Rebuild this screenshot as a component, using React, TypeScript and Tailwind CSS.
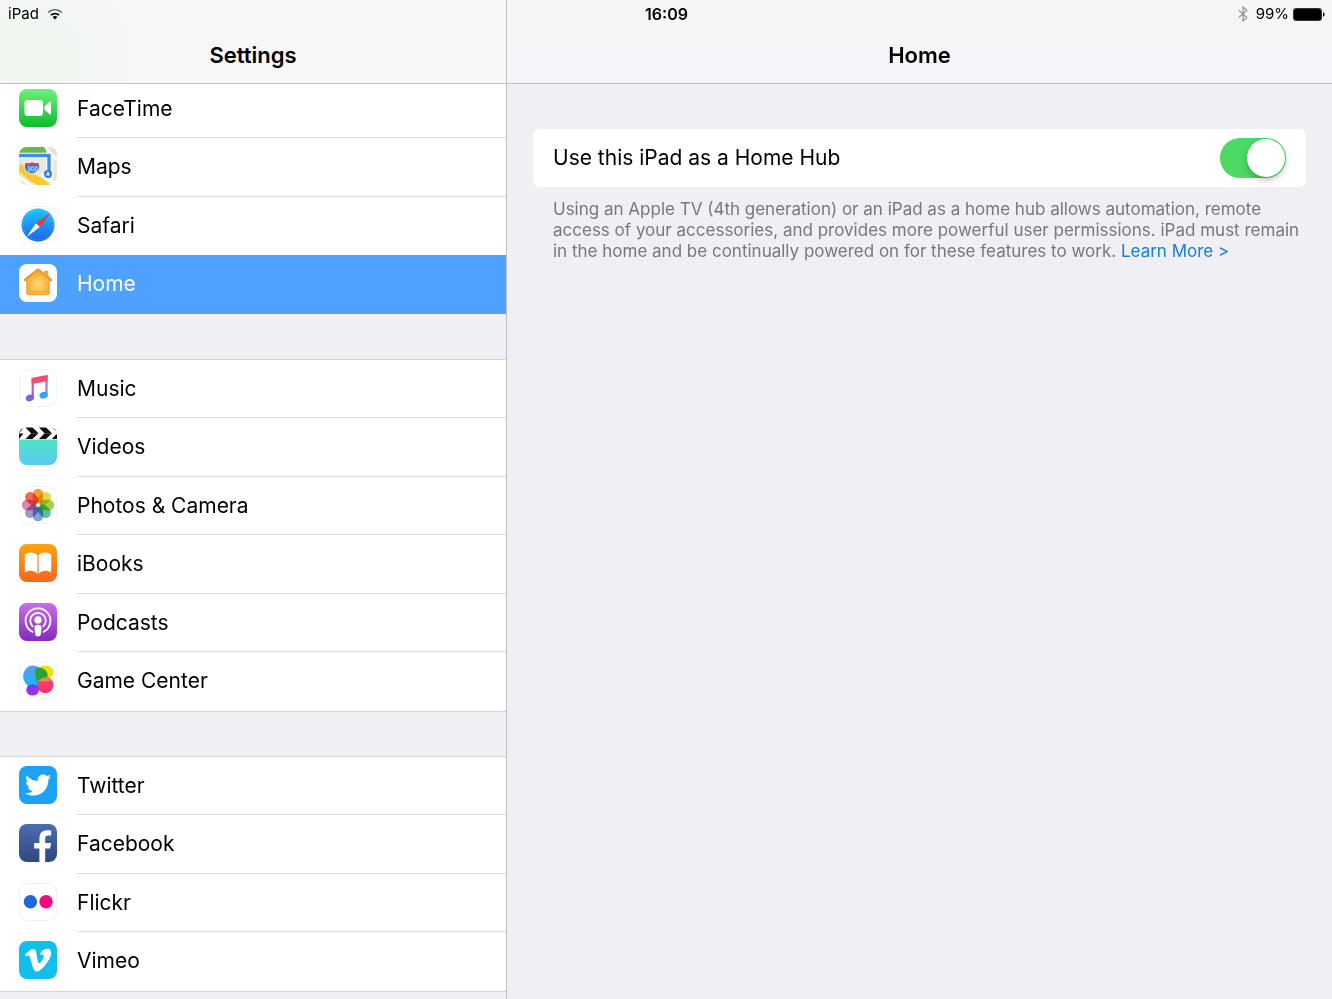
import React, { useState } from 'react';
import { FaTwitter, FaVimeoV } from 'react-icons/fa';

interface SettingsItem {
  id: string;
  label: string;
  icon: React.FC;
}

const ICON_CLASS = 'size-[38px] shrink-0';

const FaceTimeIcon: React.FC = () => (
  <svg viewBox="0 0 38 38" className={ICON_CLASS} aria-hidden="true">
    <defs>
      <linearGradient id="facetime-bg" x1="0" y1="0" x2="0" y2="1">
        <stop offset="0" stopColor="#6df07c" />
        <stop offset="1" stopColor="#0cbd2a" />
      </linearGradient>
    </defs>
    <rect width="38" height="38" rx="8" fill="url(#facetime-bg)" />
    <rect x="5.5" y="11" width="18.5" height="16" rx="3.2" fill="#fff" />
    <path d="M25.5 17.2 30.6 12.8Q32 11.8 32 13.5V24.5Q32 26.2 30.6 25.2L25.5 20.8Z" fill="#fff" />
  </svg>
);

const MapsIcon: React.FC = () => (
  <svg viewBox="0 0 38 38" className={ICON_CLASS} aria-hidden="true">
    <defs>
      <clipPath id="maps-clip">
        <rect width="38" height="38" rx="8" />
      </clipPath>
    </defs>
    <g clipPath="url(#maps-clip)">
      <rect width="38" height="38" fill="#ece6dc" />
      <path d="M0 0H27V6H0Z" fill="#6bb54d" />
      <path d="M27 0H38V9H33Z" fill="#f5d9d6" />
      <path d="M26 0 38 13M33 10V38M22 27 38 38M0 30 12 38" stroke="#fff" strokeWidth="2.5" fill="none" />
      <path d="M0 20C6 24 9 28 14 31S24 36 27 40" stroke="#fcc92c" strokeWidth="8" fill="none" />
      <path d="M0 8.5H30V24" stroke="#fff" strokeWidth="5.5" fill="none" />
      <path d="M0 8.5H30V24" stroke="#3d8df0" strokeWidth="3.4" fill="none" />
      <circle cx="29" cy="27" r="4" fill="#2f7de8" />
      <path d="M29 24 31 29 29 28 27 29Z" fill="#fff" />
      <path d="M6.5 15.5Q10 16.5 13 15Q16 16.5 19.5 15.5Q22 20 19.5 23.5Q16.5 26 13 27Q9 26 6.5 23.5Q4 20 6.5 15.5Z" fill="#2e78dc" stroke="#fff" strokeWidth="0.8" />
      <path d="M6.8 15.8Q10 16.8 13 15.3Q16 16.8 19.2 15.8L20 18H6Z" fill="#b8517a" />
      <path d="M8.5 19.8H11V24H8.5M8.5 21.9H11M12.6 19.8H14.6V24H12.6ZM16.2 19.8H18.2V24H16.2Z" stroke="#cfe3fb" strokeWidth="0.8" fill="none" />
    </g>
  </svg>
);

const SafariIcon: React.FC = () => (
  <svg viewBox="0 0 38 38" className={ICON_CLASS} aria-hidden="true">
    <defs>
      <linearGradient id="safari-bg" x1="0" y1="0" x2="0" y2="1">
        <stop offset="0" stopColor="#1fc6fb" />
        <stop offset="1" stopColor="#1d62e8" />
      </linearGradient>
    </defs>
    <rect x="0.5" y="0.5" width="37" height="37" rx="8" fill="#fff" stroke="#f4f4f4" />
    <circle cx="19" cy="19" r="16.5" fill="url(#safari-bg)" />
    <circle cx="19" cy="19" r="14.8" fill="none" stroke="#fff" strokeOpacity="0.35" strokeWidth="1.4" strokeDasharray="0.6 1.7" />
    <path d="M31 7 17 17.2 20.8 21Z" fill="#f2323a" />
    <path d="M7.5 31 17 17.2 20.8 21Z" fill="#fff" />
  </svg>
);

const HomeIcon: React.FC = () => (
  <svg viewBox="0 0 38 38" className={ICON_CLASS} aria-hidden="true">
    <defs>
      <radialGradient id="home-house" cx="0.5" cy="0.6" r="0.55">
        <stop offset="0" stopColor="#fdd873" />
        <stop offset="1" stopColor="#f5a72c" />
      </radialGradient>
    </defs>
    <rect width="38" height="38" rx="8" fill="#fff" />
    <path
      d="M18.2 5.2Q19 4.6 19.8 5.2L25.7 9.8V7.2H28.8V12.2L32.4 15Q33.4 16.2 32.2 17H30.2V29.2Q30.2 30.8 28.6 30.8H9.4Q7.8 30.8 7.8 29.2V17H5.8Q4.6 16.2 5.6 15Z"
      fill="url(#home-house)"
      stroke="#eb9a2c"
      strokeWidth="1"
    />
    <path d="M6.5 16 19 6.4 31.5 16" fill="none" stroke="#ee9a28" strokeWidth="1.6" />
    <path d="M10.5 17.6 19 11 27.5 17.6V28H10.5Z" fill="none" stroke="#f0a02e" strokeOpacity="0.5" strokeWidth="1" />
  </svg>
);

const MusicIcon: React.FC = () => (
  <svg viewBox="0 0 38 38" className={ICON_CLASS} aria-hidden="true">
    <defs>
      <linearGradient id="music-left" x1="0" y1="6" x2="0" y2="33" gradientUnits="userSpaceOnUse">
        <stop offset="0.1" stopColor="#f5466b" />
        <stop offset="0.45" stopColor="#d158b5" />
        <stop offset="1" stopColor="#6a62ee" />
      </linearGradient>
      <linearGradient id="music-right" x1="0" y1="6" x2="0" y2="30" gradientUnits="userSpaceOnUse">
        <stop offset="0.1" stopColor="#f5466b" />
        <stop offset="0.5" stopColor="#a878d8" />
        <stop offset="0.9" stopColor="#2fa4f4" />
      </linearGradient>
    </defs>
    <rect x="0.5" y="0.5" width="37" height="37" rx="8" fill="#fff" stroke="#f2f2f2" />
    <path d="M12.6 9 28.6 5.8V12L12.6 15.2Z" fill="#f24d70" />
    <path d="M12.6 9H14.8V28.5H12.6Z" fill="url(#music-left)" />
    <path d="M26.4 7H28.6V26H26.4Z" fill="url(#music-right)" />
    <ellipse cx="10.9" cy="28.9" rx="4.2" ry="3.3" transform="rotate(-18 10.9 28.9)" fill="#7764ea" />
    <ellipse cx="24.7" cy="26.2" rx="4.2" ry="3.3" transform="rotate(-18 24.7 26.2)" fill="#38a2f0" />
  </svg>
);

const VideosIcon: React.FC = () => (
  <svg viewBox="0 0 38 38" className={ICON_CLASS} aria-hidden="true">
    <defs>
      <linearGradient id="videos-bg" x1="0" y1="0" x2="0" y2="1">
        <stop offset="0.1" stopColor="#4de3c4" />
        <stop offset="1" stopColor="#5bc8f8" />
      </linearGradient>
      <clipPath id="videos-clip">
        <rect width="38" height="38" rx="8" />
      </clipPath>
    </defs>
    <g clipPath="url(#videos-clip)">
      <rect width="38" height="38" fill="#fff" />
      <rect y="12.5" width="38" height="25.5" fill="url(#videos-bg)" />
      <path d="M-3 0.5H4.5L0 6.5ZM6.5 0.5H13.5L19.5 6.2H12ZM20 0.5H27L33 6.2H25.5ZM33.5 0.5H40V6.2H39Z" fill="#111" />
      <path d="M0 6.5H4.5L0 12H-3ZM12 6.2H19.5L13.5 12H6.5ZM25.5 6.2H33L27 12H20ZM37 7.5H40V12H33Z" fill="#111" />
    </g>
  </svg>
);

const PETALS = ['#f7941d', '#e0da2b', '#9acb3e', '#4fb98a', '#6a9ad8', '#9b87c9', '#dc7a9f', '#f05a48'];

const PhotosIcon: React.FC = () => (
  <svg viewBox="0 0 38 38" className={ICON_CLASS} aria-hidden="true">
    <rect x="0.5" y="0.5" width="37" height="37" rx="8" fill="#fff" stroke="#f4f4f4" />
    {PETALS.map((color, i) => (
      <rect
        key={color}
        x="13.8"
        y="2.8"
        width="10.4"
        height="14.6"
        rx="5.2"
        fill={color}
        opacity="0.9"
        className="mix-blend-multiply"
        transform={`rotate(${i * 45} 19 19)`}
      />
    ))}
  </svg>
);

const IBooksIcon: React.FC = () => (
  <svg viewBox="0 0 38 38" className={ICON_CLASS} aria-hidden="true">
    <defs>
      <linearGradient id="ibooks-bg" x1="0" y1="0" x2="0" y2="1">
        <stop offset="0" stopColor="#fca50c" />
        <stop offset="1" stopColor="#f9641e" />
      </linearGradient>
    </defs>
    <rect width="38" height="38" rx="8" fill="url(#ibooks-bg)" />
    <path d="M18.4 11.2C15.5 7.7 9 7.7 5.8 10.8V28.5C9.5 26 15.3 26 18.4 30Z" fill="#fff" />
    <path d="M19.6 11.2C22.5 7.7 29 7.7 32.2 10.8V28.5C28.5 26 22.7 26 19.6 30Z" fill="#fff" />
  </svg>
);

const PodcastsIcon: React.FC = () => (
  <svg viewBox="0 0 38 38" className={ICON_CLASS} aria-hidden="true">
    <defs>
      <linearGradient id="podcasts-bg" x1="0" y1="0" x2="0" y2="1">
        <stop offset="0" stopColor="#cb6cec" />
        <stop offset="1" stopColor="#832bc1" />
      </linearGradient>
    </defs>
    <rect width="38" height="38" rx="8" fill="url(#podcasts-bg)" />
    <g fill="none" stroke="#fff" strokeWidth="1.8" strokeLinecap="round">
      <path d="M13.6 28.9A12.4 12.4 0 1 1 24.4 28.9" />
      <path d="M13.6 23.3A7.8 7.8 0 1 1 24.4 23.3" />
    </g>
    <circle cx="19" cy="16.9" r="3.6" fill="#fff" />
    <path d="M15.4 24.4Q15.4 21.8 19 21.8T22.6 24.4L21.8 31.4Q21.4 33.4 19 33.4T16.2 31.4Z" fill="#fff" />
  </svg>
);

const GameCenterIcon: React.FC = () => (
  <svg viewBox="0 0 38 38" className={ICON_CLASS} aria-hidden="true">
    <defs>
      <linearGradient id="gc-blue" x1="0" y1="0" x2="0" y2="1">
        <stop offset="0" stopColor="#5f9de8" />
        <stop offset="1" stopColor="#18b5f8" />
      </linearGradient>
      <linearGradient id="gc-pink" x1="0" y1="0" x2="0" y2="1">
        <stop offset="0" stopColor="#ef4a8a" />
        <stop offset="1" stopColor="#fc3158" />
      </linearGradient>
    </defs>
    <rect x="0.5" y="0.5" width="37" height="37" rx="8" fill="#fff" stroke="#f4f4f4" />
    <ellipse cx="26.3" cy="11.2" rx="8.2" ry="6.8" fill="#f3dc0c" />
    <ellipse cx="14" cy="15.3" rx="10" ry="10.8" fill="url(#gc-blue)" />
    <ellipse cx="26.2" cy="24" rx="8.4" ry="8.2" fill="url(#gc-pink)" />
    <path d="M17 7Q22.5 5 27 10Q30 14 27.8 16.8Q21.5 17.5 18.8 21Q14.5 13 17 7Z" fill="#27a52e" />
    <path d="M19 20.2Q22 16.5 27.8 16.4Q31.5 16.6 33.6 19.6Q29 20.6 19 20.2Z" fill="#f28a4a" />
    <ellipse cx="13.6" cy="29" rx="6.4" ry="5.6" fill="#9a2df0" />
    <path d="M8 26Q12 26.6 18.2 25.2Q13.5 21.2 8 26Z" fill="#4a4be0" />
  </svg>
);

const TwitterIcon: React.FC = () => (
  <span className="flex size-[38px] shrink-0 items-center justify-center rounded-lg bg-[#1da1f2] text-white">
    <FaTwitter size={26} aria-hidden="true" />
  </span>
);

const FacebookIcon: React.FC = () => (
  <svg viewBox="0 0 38 38" className={ICON_CLASS} aria-hidden="true">
    <defs>
      <linearGradient id="facebook-bg" x1="0" y1="0" x2="0" y2="1">
        <stop offset="0" stopColor="#4d6cb0" />
        <stop offset="1" stopColor="#2f4880" />
      </linearGradient>
    </defs>
    <rect width="38" height="38" rx="8" fill="url(#facebook-bg)" />
    <path d="M20.4 38V24.6H15.2V18.9H20.4V14.6C20.4 9 23.5 6.2 28.2 6.2C30.3 6.2 31.6 6.3 32.2 6.4V11.6H29.2C26.7 11.6 26.2 12.8 26.2 14.7V18.9H32L31.1 24.6H26.2V38Z" fill="#fff" />
  </svg>
);

const FlickrIcon: React.FC = () => (
  <svg viewBox="0 0 38 38" className={ICON_CLASS} aria-hidden="true">
    <rect x="0.5" y="0.5" width="37" height="37" rx="8" fill="#fff" stroke="#f0f0f0" />
    <circle cx="11.4" cy="18.8" r="6.7" fill="#1f69da" />
    <circle cx="27" cy="18.8" r="6.7" fill="#fb0284" />
  </svg>
);

const VimeoIcon: React.FC = () => (
  <span className="flex size-[38px] shrink-0 items-center justify-center rounded-lg bg-[#12bfea] text-white">
    <FaVimeoV size={30} aria-hidden="true" />
  </span>
);

const GROUPS: SettingsItem[][] = [
  [
    { id: 'facetime', label: 'FaceTime', icon: FaceTimeIcon },
    { id: 'maps', label: 'Maps', icon: MapsIcon },
    { id: 'safari', label: 'Safari', icon: SafariIcon },
    { id: 'home', label: 'Home', icon: HomeIcon }
  ],
  [
    { id: 'music', label: 'Music', icon: MusicIcon },
    { id: 'videos', label: 'Videos', icon: VideosIcon },
    { id: 'photos', label: 'Photos & Camera', icon: PhotosIcon },
    { id: 'ibooks', label: 'iBooks', icon: IBooksIcon },
    { id: 'podcasts', label: 'Podcasts', icon: PodcastsIcon },
    { id: 'gamecenter', label: 'Game Center', icon: GameCenterIcon }
  ],
  [
    { id: 'twitter', label: 'Twitter', icon: TwitterIcon },
    { id: 'facebook', label: 'Facebook', icon: FacebookIcon },
    { id: 'flickr', label: 'Flickr', icon: FlickrIcon },
    { id: 'vimeo', label: 'Vimeo', icon: VimeoIcon }
  ]
];

const StatusBar: React.FC = () => (
  <div className="absolute inset-x-0 top-0 z-20 grid h-7 grid-cols-3 items-center pr-[7px] pl-2 text-[15px]">
    <div className="flex items-center gap-2">
      <span>iPad</span>
      <svg width="16" height="12" viewBox="0 0 16 12" fill="none" stroke="#000" strokeWidth="1.7" aria-hidden="true">
        <path d="M1.2 4.4C5 0.7 11 0.7 14.8 4.4" stroke="#555" strokeWidth="1.4" />
        <path d="M3.9 7.2C6.2 5 9.8 5 12.1 7.2" />
        <path d="M8 11.4 5.6 9C7 7.8 9 7.8 10.4 9Z" fill="#000" stroke="none" />
      </svg>
    </div>
    <span className="text-center text-base font-semibold">16:09</span>
    <div className="flex items-center justify-end gap-1">
      <svg width="10" height="16" viewBox="0 0 10 16" fill="none" stroke="#8c8c8c" strokeWidth="1.1" className="mr-1" aria-hidden="true">
        <path d="M0.8 4.4 8.8 11.6 5 15V1L8.8 4.4 0.8 11.6" />
      </svg>
      <span>99%</span>
      <svg width="32" height="13" viewBox="0 0 32 13" aria-hidden="true">
        <rect x="0.5" y="0.5" width="28" height="12" rx="2" fill="#fff" stroke="#000" strokeWidth="0.8" />
        <rect x="1" y="1" width="27" height="11" rx="1.5" fill="#000" />
        <path d="M30 4.2Q31.6 4.8 31.6 6.5T30 8.8Z" fill="#000" />
      </svg>
    </div>
  </div>
);

interface SettingsRowProps {
  item: SettingsItem;
  selected: boolean;
  divider: string;
  onSelect: (id: string) => void;
}

const SettingsRow: React.FC<SettingsRowProps> = ({ item, selected, divider, onSelect }) => {
  const Icon = item.icon;

  return (
    <li className="h-[58px] even:h-[59px]">
      <button
        onClick={() => onSelect(item.id)}
        aria-current={selected ? 'page' : undefined}
        className={`flex h-full w-full items-center gap-5 pl-[19px] text-left text-[21px] ${
          selected ? 'bg-[#4da1ff] text-white' : 'bg-white text-black'
        }`}
      >
        <span className="pb-[3px]">
          <Icon />
        </span>
        <span className={`flex h-full flex-1 items-center border-b ${divider}`}>{item.label}</span>
      </button>
    </li>
  );
};

export default function App() {
  const [selectedId, setSelectedId] = useState('home');
  const [hubEnabled, setHubEnabled] = useState(true);

  const current = GROUPS.flat().find(item => item.id === selectedId);

  // No divider on the last row or next to the highlighted one
  const getDivider = (group: SettingsItem[], index: number) => {
    const next = group[index + 1];
    const hidden = !next || next.id === selectedId || group[index].id === selectedId;
    return hidden ? 'border-transparent' : 'border-[#dcdbe0]';
  };

  return (
    <div className="relative flex min-h-screen bg-[#efeff4] font-[Inter,'Liberation_Sans',sans-serif] text-black">
      <StatusBar />

      {/* Sidebar */}
      <aside className="w-[507px] shrink-0 border-r border-[#c2c1c6]">
        <header className="relative z-10 flex h-[84px] items-end justify-center border-b border-[#c3c3c6] bg-[#f7f7f7] bg-[radial-gradient(circle_at_30px_60px,#eef6ee_0,#f7f7f7_120px)] pb-3">
          <h1 className="text-[22px] leading-8 font-semibold">Settings</h1>
        </header>
        <nav aria-label="Settings" className="-mt-1 flex flex-col gap-[45px]">
          {GROUPS.map((group, groupIndex) => (
            <ul
              key={group[0].id}
              className={groupIndex > 0 ? 'border-t border-[#d3d2d7] shadow-[0_1px_0_#d3d2d7]' : ''}
            >
              {group.map((item, index) => (
                <SettingsRow
                  key={item.id}
                  item={item}
                  selected={item.id === selectedId}
                  divider={getDivider(group, index)}
                  onSelect={setSelectedId}
                />
              ))}
            </ul>
          ))}
        </nav>
      </aside>

      {/* Detail pane */}
      <main className="min-w-0 flex-1">
        <header className="flex h-[84px] items-end justify-center border-b border-[#c3c3c6] bg-linear-to-b from-[#f6f6f6] from-55% to-[#f5f5fa] to-60% pb-3">
          <h2 className="text-[22px] leading-8 font-semibold">{current?.label}</h2>
        </header>

        {selectedId === 'home' && (
          <section className="px-[26px] pt-[45px]">
            <label className="flex h-[58px] cursor-pointer items-center justify-between rounded-md bg-white px-5 text-[21px]">
              <span>Use this iPad as a Home Hub</span>
              <input
                type="checkbox"
                role="switch"
                checked={hubEnabled}
                onChange={e => setHubEnabled(e.target.checked)}
                className="peer sr-only"
              />
              <span className="flex h-10 w-[66px] items-center rounded-full bg-[#e5e5ea] p-px transition-colors peer-checked:justify-end peer-checked:bg-[#4cd964]">
                <span className="size-[38px] rounded-full bg-white shadow-[0_3px_6px_rgba(0,0,0,0.25)]" />
              </span>
            </label>
            <p className="pt-3 pr-1 pl-5 text-[17px] leading-[21px] text-[#77777c]">
              Using an Apple TV (4th generation) or an iPad as a home hub allows automation, remote
              access of your accessories, and provides more powerful user permissions. iPad must remain
              in the home and be continually powered on for these features to work.{' '}
              <a href="#learn-more" className="whitespace-nowrap text-[#1580dc]">
                Learn More &gt;
              </a>
            </p>
          </section>
        )}
      </main>
    </div>
  );
}
